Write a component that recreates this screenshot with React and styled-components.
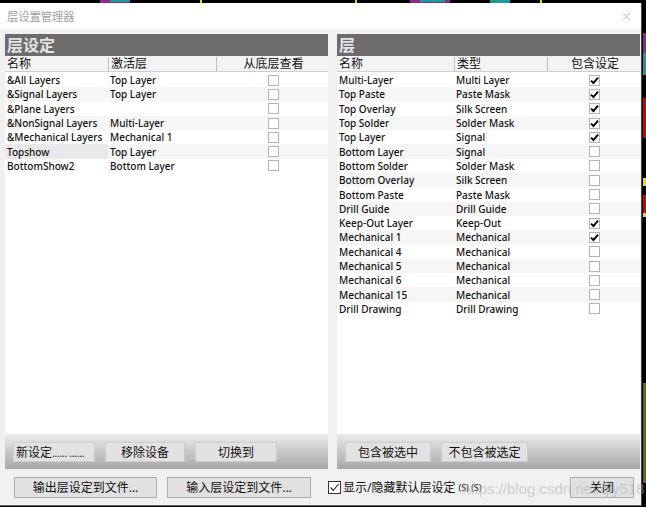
import React from 'react';
import styled, { createGlobalStyle } from 'styled-components';
import { X } from 'lucide-react';

const GlobalStyle = createGlobalStyle`
  html, body { margin: 0; padding: 0; background: #000; }
  body { font-family: "Noto Sans", "Noto Sans CJK SC", sans-serif; }
  * { box-sizing: border-box; }
`;

const layerSets = [
  ['&All Layers', 'Top Layer'],
  ['&Signal Layers', 'Top Layer'],
  ['&Plane Layers', ''],
  ['&NonSignal Layers', 'Multi-Layer'],
  ['&Mechanical Layers', 'Mechanical 1'],
  ['Topshow', 'Top Layer', true],
  ['BottomShow2', 'Bottom Layer'],
];

const layers = [
  ['Multi-Layer', 'Multi Layer', true],
  ['Top Paste', 'Paste Mask', true],
  ['Top Overlay', 'Silk Screen', true],
  ['Top Solder', 'Solder Mask', true],
  ['Top Layer', 'Signal', true],
  ['Bottom Layer', 'Signal', false],
  ['Bottom Solder', 'Solder Mask', false],
  ['Bottom Overlay', 'Silk Screen', false],
  ['Bottom Paste', 'Paste Mask', false],
  ['Drill Guide', 'Drill Guide', false],
  ['Keep-Out Layer', 'Keep-Out', true],
  ['Mechanical 1', 'Mechanical', true],
  ['Mechanical 4', 'Mechanical', false],
  ['Mechanical 5', 'Mechanical', false],
  ['Mechanical 6', 'Mechanical', false],
  ['Mechanical 15', 'Mechanical', false],
  ['Drill Drawing', 'Drill Drawing', false],
];

const Screen = styled.div`
  position: relative;
  width: 646px;
  height: 507px;
  background: #000;
  overflow: hidden;
  display: flex;
  flex-direction: column;
`;

const TopStrip = styled.svg`
  display: block;
  flex: none;
`;

const Middle = styled.div`
  display: flex;
  height: 503px;
`;

const SideStrip = styled.svg`
  display: block;
  flex: none;
`;

const Window = styled.div`
  width: 642px;
  height: 503px;
  display: flex;
  flex-direction: column;
  background: #f0f0f0;
  border-right: 1px solid #4a4a4a;
  border-bottom: 1px solid #6a6a6a;
`;

const TitleBar = styled.div`
  height: 26px;
  flex: none;
  background: #fff;
  display: flex;
  align-items: center;
  justify-content: space-between;
  padding: 0 8px 0 7px;
  color: #a2a2a2;
  font-size: 11.5px;
  letter-spacing: -0.3px;
`;

const Body = styled.div`
  flex: 1;
  display: flex;
  flex-direction: column;
  padding: 5px 1px 0 5px;
`;

const Panels = styled.div`
  display: flex;
  gap: 9px;
  height: 435px;
`;

const Panel = styled.div`
  width: ${p => p.$w}px;
  display: flex;
  flex-direction: column;
`;

const PanelTitle = styled.div`
  height: 22px;
  flex: none;
  background: #6c6c6c;
  color: #e4e4e4;
  font-size: 16px;
  font-weight: 700;
  line-height: 22px;
  padding-left: 2px;
`;

const Grid = styled.div`
  display: grid;
  grid-template-columns: ${p => p.$cols};
  align-items: center;
`;

const HeadRow = styled(Grid)`
  height: 16px;
  flex: none;
  background: #f3f3f3;
  border-bottom: 1px solid #cfcfcf;
  font-size: 12px;
  color: #111;
`;

const HeadCell = styled.div`
  height: 14px;
  line-height: 14px;
  padding-left: 2px;
  text-align: ${p => (p.$center ? 'center' : 'left')};
  border-left: ${p => (p.$sep ? '1px solid #bdbdbd' : 'none')};
`;

const List = styled.div`
  flex: 1;
  background: #fff;
  padding-top: 1px;
`;

const Row = styled(Grid)`
  height: 14.3px;
  background: ${p => (p.$odd ? '#f6f6f6' : '#fff')};
  font-size: 10px;
  font-weight: 500;
  color: #111;
`;

const Cell = styled.div`
  height: 100%;
  display: flex;
  align-items: center;
  padding-left: 2px;
  white-space: nowrap;
  background: ${p => (p.$sel ? '#e9e9e9' : 'transparent')};
  justify-content: ${p => (p.$center ? 'center' : 'flex-start')};
`;

const Box = styled.span`
  width: 11px;
  height: 11px;
  background: #fff;
  border: 1px solid #b4b4b4;
  display: flex;
  align-items: center;
  justify-content: center;
`;

const ButtonBar = styled.div`
  height: 35px;
  flex: none;
  background: linear-gradient(#ebebeb, #a7a7a7);
  display: flex;
  align-items: flex-start;
  gap: 10px;
  padding: 8px 0 0 8px;
`;

const BarButton = styled.button`
  width: ${p => p.$w}px;
  height: 20px;
  padding: 0 2px;
  background: #e2e2e2;
  border: 1px solid #cdcdcd;
  font-family: inherit;
  font-size: 12px;
  color: #111;
  white-space: nowrap;
  overflow: hidden;
  text-align: ${p => (p.$left ? 'left' : 'center')};
`;

const Dots = styled.span`
  font-size: 10px;
  letter-spacing: -0.2px;
`;

const Footer = styled.div`
  flex: 1;
  display: flex;
  align-items: center;
  padding: 0 6px 0 9px;
`;

const FootButton = styled.button`
  width: ${p => p.$w}px;
  height: 21px;
  padding: 0;
  margin-right: ${p => p.$mr || 0}px;
  background: #e1e1e1;
  border: 1px solid #adadad;
  font-family: inherit;
  font-size: 12px;
  color: #111;
`;

const Toggle = styled.label`
  display: flex;
  align-items: center;
  gap: 2px;
  font-size: 12px;
  color: #111;
  margin-left: 17px;
`;

const ToggleBox = styled.span`
  width: 13px;
  height: 13px;
  border: 1px solid #333;
  background: #fff;
  display: flex;
  align-items: center;
  justify-content: center;
`;

const Small = styled.span`
  font-size: 9px;
  margin-left: 1px;
`;

const Spacer = styled.div`
  flex: 1;
`;

const Watermark = styled.div`
  position: absolute;
  left: 462px;
  top: 480px;
  font-family: "Liberation Sans", sans-serif;
  font-size: 15px;
  color: rgba(170, 170, 170, 0.5);
  pointer-events: none;
  white-space: nowrap;
`;

const Check = () => (
  <svg width="9" height="9" viewBox="0 0 9 9">
    <path d="M1 4.6 L3.4 7 L8 1.6" fill="none" stroke="#000" strokeWidth="1.9" />
  </svg>
);

const ThinCheck = () => (
  <svg width="11" height="11" viewBox="0 0 11 11">
    <path d="M1.5 5.5 L4.3 8.5 L9.5 2" fill="none" stroke="#222" strokeWidth="1.1" />
  </svg>
);

const CheckBox = ({ on }) => <Box>{on && <Check />}</Box>;

export default function App() {
  const leftCols = '103px 108px 1fr';
  const rightCols = '117px 93px 1fr';
  return (
    <Screen>
      <GlobalStyle />
      <TopStrip width="646" height="3">
        <rect x="0" y="0" width="646" height="3" fill="#000" />
        <rect x="100" y="0" width="30" height="3" fill="#8a2a8a" />
        <rect x="110" y="0" width="20" height="2" fill="#1a9a9a" />
        <rect x="200" y="0" width="2" height="3" fill="#e0e000" />
        <rect x="355" y="0" width="2" height="3" fill="#e0e000" />
        <rect x="410" y="0" width="40" height="3" fill="#8a2a8a" />
        <rect x="420" y="0" width="25" height="2" fill="#1a9a9a" />
        <rect x="490" y="0" width="20" height="3" fill="#1a9a9a" />
        <rect x="540" y="0" width="2" height="3" fill="#e0e000" />
      </TopStrip>
      <Middle>
        <Window>
          <TitleBar>
            <span>层设置管理器</span>
            <X size={13} strokeWidth={1} color="#8a8a8a" />
          </TitleBar>
          <Body>
            <Panels>
              <Panel $w={323}>
                <PanelTitle>层设定</PanelTitle>
                <HeadRow $cols={leftCols}>
                  <HeadCell>名称</HeadCell>
                  <HeadCell $sep>激活层</HeadCell>
                  <HeadCell $sep $center>从底层查看</HeadCell>
                </HeadRow>
                <List>
                  {layerSets.map(([name, active, sel], i) => (
                    <Row key={name} $cols={leftCols} $odd={i % 2 === 1}>
                      <Cell $sel={sel}>{name}</Cell>
                      <Cell>{active}</Cell>
                      <Cell $center>
                        <CheckBox />
                      </Cell>
                    </Row>
                  ))}
                </List>
                <ButtonBar>
                  <BarButton $w={82} $left>新设定<Dots>...... ......</Dots></BarButton>
                  <BarButton $w={80}>移除设备</BarButton>
                  <BarButton $w={82}>切换到</BarButton>
                </ButtonBar>
              </Panel>
              <Panel $w={303}>
                <PanelTitle>层</PanelTitle>
                <HeadRow $cols={rightCols}>
                  <HeadCell>名称</HeadCell>
                  <HeadCell $sep>类型</HeadCell>
                  <HeadCell $sep $center>包含设定</HeadCell>
                </HeadRow>
                <List>
                  {layers.map(([name, type, on], i) => (
                    <Row key={name} $cols={rightCols} $odd={i % 2 === 1}>
                      <Cell>{name}</Cell>
                      <Cell>{type}</Cell>
                      <Cell $center>
                        <CheckBox on={on} />
                      </Cell>
                    </Row>
                  ))}
                </List>
                <ButtonBar>
                  <BarButton $w={86}>包含被选中</BarButton>
                  <BarButton $w={87}>不包含被选定</BarButton>
                </ButtonBar>
              </Panel>
            </Panels>
            <Footer>
              <FootButton $w={143} $mr={10}>输出层设定到文件...</FootButton>
              <FootButton $w={144}>输入层设定到文件...</FootButton>
              <Toggle>
                <ToggleBox>
                  <ThinCheck />
                </ToggleBox>
                显示/隐藏默认层设定<Small>(S) (S)</Small>
              </Toggle>
              <Spacer />
              <FootButton $w={64}>关闭</FootButton>
            </Footer>
          </Body>
        </Window>
        <SideStrip width="4" height="503">
          <rect x="0" y="0" width="4" height="503" fill="#000" />
          <rect x="1" y="30" width="3" height="20" fill="#8a2a8a" />
          <rect x="1" y="50" width="3" height="22" fill="#1a9a9a" />
          <rect x="1" y="95" width="3" height="40" fill="#d00000" />
          <rect x="1" y="175" width="3" height="8" fill="#e0e000" />
          <rect x="1" y="192" width="3" height="18" fill="#d00000" />
          <rect x="1" y="210" width="3" height="4" fill="#e0e000" />
          <rect x="1" y="380" width="3" height="100" fill="#6a6a00" />
        </SideStrip>
      </Middle>
      <Watermark>https://blog.csdn.net/qly518</Watermark>
    </Screen>
  );
}
